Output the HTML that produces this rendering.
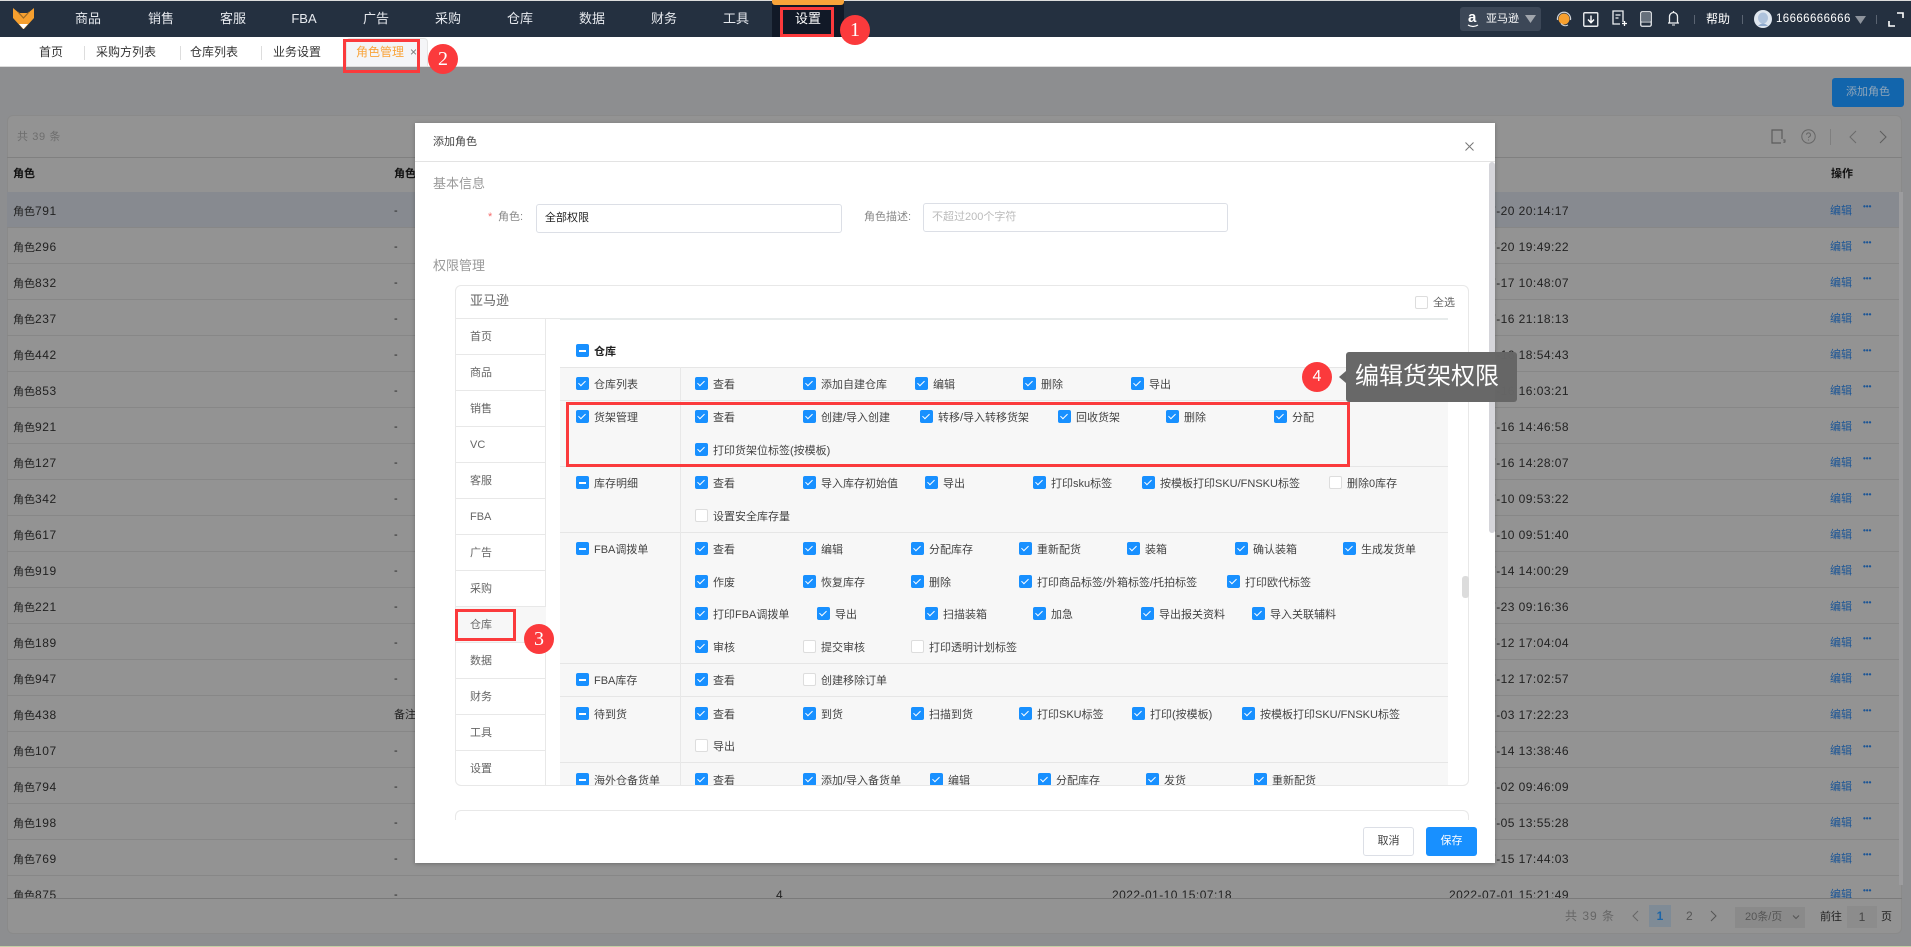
<!DOCTYPE html>
<html lang="zh">
<head>
<meta charset="utf-8">
<title>添加角色</title>
<style>
*{box-sizing:border-box}
html,body{margin:0;padding:0;width:1911px;height:947px;overflow:hidden;background:#8d8e90}
body{position:relative;font:11px/14px "Liberation Sans","Noto Sans CJK SC",sans-serif;color:#333}
div,span,a,i,svg{position:absolute}
.nav{left:0;top:1px;width:1911px;height:36px;background:#243040}
.n{top:10px;width:72px;text-align:center;font-size:13px;line-height:18px;color:#e6e9ee}
.tabs{left:0;top:37px;width:1911px;height:30px;background:#fff;border-bottom:1px solid #dcdcdc}
.tb{top:8px;font-size:12px;line-height:16px;color:#333;white-space:nowrap}
.card{left:7px;top:115px;width:1895px;height:819px;background:#939393;border:1px solid #8a8a8a;border-radius:6px}
.r{left:7px;width:1892px;height:36px;line-height:38px;border-bottom:1px solid #878787;color:#222;white-space:nowrap;font-size:11px}
.r a{top:0}
.a1{left:6px}.a1 b{font-weight:400;font-size:12px;letter-spacing:.6px}
.a2{left:387px}
.a3{left:769px;font-size:12px}
.d1{left:1105px;font-size:12px;letter-spacing:.45px}
.d2{left:1442px;font-size:12px;letter-spacing:.45px}
.e{left:1823px;color:#1b5596}
.m{left:1856px;top:-4px!important;color:#1b5596;font-size:8px;font-weight:700}
.modal{left:415px;top:123px;width:1080px;height:740px;background:#fff;box-shadow:0 1px 4px rgba(0,0,0,.25)}
.lb{color:#999;white-space:nowrap}
.ip{background:#fff;border:1px solid #dcdfe6;border-radius:3px;height:29px;line-height:27px;padding-left:8px;white-space:nowrap}
.s{left:456px;width:89px;height:36px;border-bottom:1px solid #e8e8e8;padding-left:14px;line-height:36px;color:#666;font-size:11px;background:#fff}
.rw{left:560px;width:888px;background:#f7f7f7;border-top:1px solid #e6e6e6}
.cv{left:680px;width:1px;background:#e8e8e8}
.p{white-space:nowrap;height:14px;color:#444;padding-left:18px;font-size:11px;line-height:14px}
.p i{left:0;top:-1px;width:13px;height:13px;background:#1890ff;border-radius:2px}
.p i:after{content:"";position:absolute;left:4px;top:2px;width:3px;height:6px;border:solid #fff;border-width:0 1px 1px 0;transform:rotate(45deg)}
.p.u i{background:#fff;border:1px solid #ddd}
.p.u i:after{display:none}
.p.h i:after{left:3px;top:6px;width:7px;height:1.5px;background:#fff;border:0;transform:none}
.rb{border:3px solid #fb3a3c;background:transparent}
.ci{width:30px;height:30px;border-radius:50%;background:#fb3a3c;color:#fff;text-align:center;line-height:30px;font-size:20px;font-family:"Liberation Serif",serif}
</style>
</head>
<body>
<div style="left:0;top:0;width:1911px;height:1px;background:#ddd"></div>

<!-- NAV -->
<div class="nav"></div>
<svg style="left:13px;top:8px" width="21" height="21" viewBox="0 0 21 21"><polygon points="0,0 6,5 15,5 21,0 21,10 11,21 10,21 0,10" fill="#f7a02f"/><polyline points="5,4 10.5,10 16,4" fill="none" stroke="#9c6a28" stroke-width="1.2"/><polygon points="6,16 15,16 10.5,21" fill="#fff"/></svg>
<div style="left:772px;top:1px;width:72px;height:36px;background:#111927"></div>
<div style="left:772px;top:0;width:72px;height:5px;background:#f9a43a;border-radius:0 0 3px 3px"></div>
<div class="n" style="left:52px">商品</div>
<div class="n" style="left:125px">销售</div>
<div class="n" style="left:197px">客服</div>
<div class="n" style="left:268px">FBA</div>
<div class="n" style="left:340px">广告</div>
<div class="n" style="left:412px">采购</div>
<div class="n" style="left:484px">仓库</div>
<div class="n" style="left:556px">数据</div>
<div class="n" style="left:628px">财务</div>
<div class="n" style="left:700px">工具</div>
<div class="n" style="left:772px;color:#fff">设置</div>

<div style="left:1460px;top:7px;width:81px;height:24px;background:#3c4757;border-radius:3px"></div>
<div style="left:1468px;top:9px;color:#fff;font:700 15px/18px 'Liberation Sans',sans-serif">a</div>
<svg style="left:1467px;top:24px" width="12" height="4" viewBox="0 0 12 4"><path d="M1 1Q6 4 11 1" fill="none" stroke="#fff" stroke-width="1.2"/></svg>
<div style="left:1486px;top:12px;color:#fff;font-size:11px">亚马逊</div>
<svg style="left:1525px;top:15px" width="11" height="8"><polygon points="0,0 11,0 5.5,8" fill="#a0a5ac"/></svg>
<svg style="left:1556px;top:11px" width="16" height="17" viewBox="0 0 16 17"><circle cx="8" cy="8" r="5.5" fill="#f7a02f"/><path d="M1.5 9A6.6 6.6 0 1 1 14.5 9" fill="none" stroke="#cfd3d8" stroke-width="1.2"/><path d="M5 12.5Q8 16 12 14" fill="none" stroke="#cfd3d8"/></svg>
<svg style="left:1583px;top:12px" width="16" height="15" viewBox="0 0 16 15"><rect x=".75" y=".75" width="14" height="13.5" rx="1" fill="none" stroke="#e8eaed" stroke-width="1.4"/><path d="M8 3.5v7M5 7.5l3 3.2 3-3.2" fill="none" stroke="#fff" stroke-width="1.4"/></svg>
<svg style="left:1612px;top:10px" width="16" height="17" viewBox="0 0 16 17"><path d="M11 12V1H1v13h7M3.5 5h5M3.5 8h3" fill="none" stroke="#eef0f2" stroke-width="1.3"/><path d="M12.5 11v5M10 13.5h5" stroke="#fff" stroke-width="1.3"/></svg>
<svg style="left:1640px;top:11px" width="12" height="16" viewBox="0 0 12 16"><rect x=".75" y=".75" width="10.5" height="14.5" rx="1.5" fill="none" stroke="#e8eaed" stroke-width="1.3"/><rect x="2" y="2" width="8" height="8" fill="#66707c"/><path d="M1 11h10" stroke="#e8eaed"/></svg>
<svg style="left:1667px;top:10px" width="13" height="17" viewBox="0 0 13 17"><path d="M1 13h11M2.5 13V6.5a4 4 0 0 1 8 0V13M6.5 1v1.5" fill="none" stroke="#eef0f2" stroke-width="1.3"/><path d="M5 15h3" stroke="#eef0f2"/></svg>
<div style="left:1694px;top:15px;width:1px;height:9px;background:#5a6472"></div>
<div style="left:1706px;top:11px;color:#fff;font-size:12px;line-height:17px">帮助</div>
<div style="left:1742px;top:15px;width:1px;height:9px;background:#5a6472"></div>
<svg style="left:1754px;top:10px" width="18" height="18" viewBox="0 0 18 18"><circle cx="9" cy="9" r="9" fill="#dfe6ef"/><ellipse cx="9" cy="8" rx="5" ry="5.5" fill="#aec2dc"/><path d="M4 16q5-5 10 0" fill="#8fa9cc"/></svg>
<div style="left:1776px;top:12px;color:#fff;font-size:11.5px;letter-spacing:.4px">16666666666</div>
<svg style="left:1855px;top:16px" width="11" height="8"><polygon points="0,0 11,0 5.5,8" fill="#8d939c"/></svg>
<div style="left:1876px;top:15px;width:1px;height:9px;background:#5a6472"></div>
<svg style="left:1888px;top:12px" width="16" height="15" viewBox="0 0 16 15"><path d="M9 1h6v5M1 9v5h6" fill="none" stroke="#fff" stroke-width="1.6"/></svg>

<!-- TABS -->
<div class="tabs"></div>
<div class="tb" style="left:39px;top:44px">首页</div>
<div style="left:84px;top:46px;width:1px;height:14px;background:#ddd"></div>
<div class="tb" style="left:96px;top:44px">采购方列表</div>
<div style="left:180px;top:46px;width:1px;height:14px;background:#ddd"></div>
<div class="tb" style="left:190px;top:44px">仓库列表</div>
<div style="left:261px;top:46px;width:1px;height:14px;background:#ddd"></div>
<div class="tb" style="left:273px;top:44px">业务设置</div>
<div style="left:346px;top:38px;width:82px;height:28px;background:#f4f5f7;border:1px solid #e4e4e4;border-bottom:0;border-radius:4px 4px 0 0"></div>
<div class="tb" style="left:356px;top:44px;color:#f9a43a">角色管理</div>
<div class="tb" style="left:410px;top:44px;color:#777">×</div>

<!-- PAGE -->
<div style="left:1832px;top:78px;width:72px;height:29px;background:#1265ac;border-radius:3px;color:#90a6ba;text-align:center;line-height:29px">添加角色</div>
<div class="card"></div>
<div style="left:17px;top:130px;color:#6e6e6e;font-size:11px;letter-spacing:.6px">共 39 条</div>
<svg style="left:1771px;top:129px" width="16" height="16" viewBox="0 0 16 16"><path d="M10 14H1V1h10v9" fill="none" stroke="#5c5c5c" stroke-width="1.2"/><path d="M12 11h2v2h-1v1" fill="none" stroke="#5c5c5c"/></svg>
<svg style="left:1801px;top:129px" width="15" height="15" viewBox="0 0 15 15"><circle cx="7.5" cy="7.5" r="6.7" fill="none" stroke="#666" stroke-width="1"/><path d="M5.5 5.7a2 2 0 1 1 2.8 2c-.6.3-.8.6-.8 1.3M7.5 10.5v1" fill="none" stroke="#666"/></svg>
<div style="left:1830px;top:129px;width:1px;height:16px;background:#7f7f7f"></div>
<svg style="left:1849px;top:130px" width="8" height="14"><path d="M7 1L1 7l6 6" fill="none" stroke="#6a6a6a"/></svg>
<svg style="left:1879px;top:130px" width="8" height="14"><path d="M1 1l6 6-6 6" fill="none" stroke="#5c5c5c"/></svg>
<div style="left:7px;top:157px;width:1895px;height:1px;background:#808080"></div>
<div style="left:13px;top:167px;color:#111;font-weight:700;font-size:11px">角色</div>
<div style="left:394px;top:167px;color:#111;font-weight:700;font-size:11px">角色</div>
<div style="left:1831px;top:167px;color:#111;font-weight:700;font-size:11px">操作</div>

<div style="left:0;top:0;width:1911px;height:898px;overflow:hidden">
<div class="r" style="top:192px;background:#878a90"><a class="a1">角色<b>791</b></a><a class="a2">-</a><a class="d2">2022-07-20 20:14:17</a><a class="e">编辑</a><a class="m">•••</a></div>
<div class="r" style="top:228px"><a class="a1">角色<b>296</b></a><a class="a2">-</a><a class="d2">2022-07-20 19:49:22</a><a class="e">编辑</a><a class="m">•••</a></div>
<div class="r" style="top:264px"><a class="a1">角色<b>832</b></a><a class="a2">-</a><a class="d2">2022-07-17 10:48:07</a><a class="e">编辑</a><a class="m">•••</a></div>
<div class="r" style="top:300px"><a class="a1">角色<b>237</b></a><a class="a2">-</a><a class="d2">2022-07-16 21:18:13</a><a class="e">编辑</a><a class="m">•••</a></div>
<div class="r" style="top:336px"><a class="a1">角色<b>442</b></a><a class="a2">-</a><a class="d2">2022-07-16 18:54:43</a><a class="e">编辑</a><a class="m">•••</a></div>
<div class="r" style="top:372px"><a class="a1">角色<b>853</b></a><a class="a2">-</a><a class="d2">2022-07-16 16:03:21</a><a class="e">编辑</a><a class="m">•••</a></div>
<div class="r" style="top:408px"><a class="a1">角色<b>921</b></a><a class="a2">-</a><a class="d2">2022-07-16 14:46:58</a><a class="e">编辑</a><a class="m">•••</a></div>
<div class="r" style="top:444px"><a class="a1">角色<b>127</b></a><a class="a2">-</a><a class="d2">2022-07-16 14:28:07</a><a class="e">编辑</a><a class="m">•••</a></div>
<div class="r" style="top:480px"><a class="a1">角色<b>342</b></a><a class="a2">-</a><a class="d2">2022-07-10 09:53:22</a><a class="e">编辑</a><a class="m">•••</a></div>
<div class="r" style="top:516px"><a class="a1">角色<b>617</b></a><a class="a2">-</a><a class="d2">2022-07-10 09:51:40</a><a class="e">编辑</a><a class="m">•••</a></div>
<div class="r" style="top:552px"><a class="a1">角色<b>919</b></a><a class="a2">-</a><a class="d2">2022-07-14 14:00:29</a><a class="e">编辑</a><a class="m">•••</a></div>
<div class="r" style="top:588px"><a class="a1">角色<b>221</b></a><a class="a2">-</a><a class="d2">2022-07-23 09:16:36</a><a class="e">编辑</a><a class="m">•••</a></div>
<div class="r" style="top:624px"><a class="a1">角色<b>189</b></a><a class="a2">-</a><a class="d2">2022-07-12 17:04:04</a><a class="e">编辑</a><a class="m">•••</a></div>
<div class="r" style="top:660px"><a class="a1">角色<b>947</b></a><a class="a2">-</a><a class="d2">2022-07-12 17:02:57</a><a class="e">编辑</a><a class="m">•••</a></div>
<div class="r" style="top:696px"><a class="a1">角色<b>438</b></a><a class="a2">备注</a><a class="d2">2022-07-03 17:22:23</a><a class="e">编辑</a><a class="m">•••</a></div>
<div class="r" style="top:732px"><a class="a1">角色<b>107</b></a><a class="a2">-</a><a class="d2">2022-07-14 13:38:46</a><a class="e">编辑</a><a class="m">•••</a></div>
<div class="r" style="top:768px"><a class="a1">角色<b>794</b></a><a class="a2">-</a><a class="d2">2022-07-02 09:46:09</a><a class="e">编辑</a><a class="m">•••</a></div>
<div class="r" style="top:804px"><a class="a1">角色<b>198</b></a><a class="a2">-</a><a class="d2">2022-07-05 13:55:28</a><a class="e">编辑</a><a class="m">•••</a></div>
<div class="r" style="top:840px"><a class="a1">角色<b>769</b></a><a class="a2">-</a><a class="d2">2022-07-15 17:44:03</a><a class="e">编辑</a><a class="m">•••</a></div>
<div class="r" style="top:876px"><a class="a1">角色<b>875</b></a><a class="a2">-</a><a class="a3">4</a><a class="d1">2022-01-10 15:07:18</a><a class="d2">2022-07-01 15:21:49</a><a class="e">编辑</a><a class="m">•••</a></div>
</div>
<div style="left:1899px;top:192px;width:4px;height:693px;background:#9c9c9e"></div>
<div style="left:7px;top:898px;width:1895px;height:1px;background:#7a7a7a"></div>

<!-- PAGINATION -->
<div style="left:1565px;top:909px;color:#666;font-size:12px;letter-spacing:1px">共 39 条</div>
<svg style="left:1632px;top:910px" width="7" height="12"><path d="M6 1L1 6l5 5" fill="none" stroke="#666"/></svg>
<div style="left:1649px;top:905px;width:22px;height:22px;background:#7f8b96;color:#1b65a8;text-align:center;line-height:22px;font-size:12px;font-weight:700">1</div>
<div style="left:1686px;top:909px;color:#555;font-size:12px">2</div>
<svg style="left:1710px;top:910px" width="7" height="12"><path d="M1 1l5 5-5 5" fill="none" stroke="#555"/></svg>
<div style="left:1735px;top:907px;width:70px;height:21px;background:#8a8a8a;color:#555;line-height:21px;padding-left:10px;font-size:11px">20条/页</div>
<svg style="left:1792px;top:915px" width="8" height="5"><path d="M1 .5l3 3 3-3" fill="none" stroke="#555"/></svg>
<div style="left:1820px;top:910px;color:#222;font-size:11px">前往</div>
<div style="left:1847px;top:906px;width:30px;height:22px;background:#8c8c8c;color:#444;text-align:center;line-height:22px;font-size:12px">1</div>
<div style="left:1881px;top:910px;color:#222;font-size:11px">页</div>
<div style="left:0;top:946px;width:1911px;height:1px;background:#c5cfa5"></div>

<!-- MODAL -->
<div class="modal"></div>
<div style="left:415px;top:161px;width:1080px;height:1px;background:#e3e3e3"></div>
<div style="left:433px;top:135px;color:#444">添加角色</div>
<svg style="left:1465px;top:142px" width="9" height="9"><path d="M.5.5l8 8M8.5.5l-8 8" stroke="#777" fill="none"/></svg>
<div style="left:1489px;top:162px;width:6px;height:371px;background:#d5d5da;border-radius:3px"></div>
<div class="lb" style="left:433px;top:176px;font-size:13px;line-height:16px">基本信息</div>
<div style="left:488px;top:210px;color:#f56c6c">*</div>
<div class="lb" style="left:498px;top:210px;color:#888">角色:</div>
<div class="ip" style="left:536px;top:204px;width:306px;color:#222">全部权限</div>
<div class="lb" style="left:864px;top:210px;color:#888">角色描述:</div>
<div class="ip" style="left:923px;top:203px;width:305px;color:#bbb">不超过200个字符</div>
<div class="lb" style="left:433px;top:258px;font-size:13px;line-height:16px">权限管理</div>

<div style="left:455px;top:285px;width:1014px;height:501px;border:1px solid #e8e8e8;border-radius:6px;background:#fff"></div>
<div style="left:470px;top:293px;color:#666;font-size:13px;line-height:16px">亚马逊</div>
<div class="p u" style="left:1415px;top:296px;color:#666"><i style="top:0"></i>全选</div>
<div style="left:456px;top:318px;width:992px;height:1px;background:#e8e8e8"></div>
<div style="left:560px;top:318px;width:888px;height:2px;background:#e7ebeb"></div>

<!-- SIDE -->
<div style="left:545px;top:319px;width:1px;height:466px;background:#e8e8e8"></div>
<div class="s" style="top:319px">首页</div>
<div class="s" style="top:355px">商品</div>
<div class="s" style="top:391px">销售</div>
<div class="s" style="top:427px">VC</div>
<div class="s" style="top:463px">客服</div>
<div class="s" style="top:499px">FBA</div>
<div class="s" style="top:535px">广告</div>
<div class="s" style="top:571px">采购</div>
<div class="s" style="top:607px;background:#f7f7f7;width:90px;border-right:0">仓库</div>
<div class="s" style="top:643px">数据</div>
<div class="s" style="top:679px">财务</div>
<div class="s" style="top:715px">工具</div>
<div class="s" style="top:751px;border-bottom:0;height:33px;border-bottom-left-radius:6px">设置</div>

<!-- PERMISSION TABLE -->
<div style="left:0;top:0;width:1911px;height:785px;overflow:hidden">
<div class="p h" style="left:576px;top:345px;font-weight:700;color:#222"><i></i>仓库</div>
<div class="rw" style="top:367px;height:33px"></div>
<div class="rw" style="top:400px;height:66px"></div>
<div class="rw" style="top:466px;height:66px"></div>
<div class="rw" style="top:532px;height:131px"></div>
<div class="rw" style="top:663px;height:33px"></div>
<div class="rw" style="top:696px;height:66px"></div>
<div class="rw" style="top:762px;height:24px"></div>
<div class="cv" style="top:367px;height:418px"></div>

<div class="p" style="left:576px;top:378px"><i></i>仓库列表</div>
<div class="p" style="left:695px;top:378px"><i></i>查看</div>
<div class="p" style="left:803px;top:378px"><i></i>添加自建仓库</div>
<div class="p" style="left:915px;top:378px"><i></i>编辑</div>
<div class="p" style="left:1023px;top:378px"><i></i>删除</div>
<div class="p" style="left:1131px;top:378px"><i></i>导出</div>

<div class="p" style="left:576px;top:411px"><i></i>货架管理</div>
<div class="p" style="left:695px;top:411px"><i></i>查看</div>
<div class="p" style="left:803px;top:411px"><i></i>创建/导入创建</div>
<div class="p" style="left:920px;top:411px"><i></i>转移/导入转移货架</div>
<div class="p" style="left:1058px;top:411px"><i></i>回收货架</div>
<div class="p" style="left:1166px;top:411px"><i></i>删除</div>
<div class="p" style="left:1274px;top:411px"><i></i>分配</div>
<div class="p" style="left:695px;top:444px"><i></i>打印货架位标签(按模板)</div>

<div class="p h" style="left:576px;top:477px"><i></i>库存明细</div>
<div class="p" style="left:695px;top:477px"><i></i>查看</div>
<div class="p" style="left:803px;top:477px"><i></i>导入库存初始值</div>
<div class="p" style="left:925px;top:477px"><i></i>导出</div>
<div class="p" style="left:1033px;top:477px"><i></i>打印sku标签</div>
<div class="p" style="left:1142px;top:477px"><i></i>按模板打印SKU/FNSKU标签</div>
<div class="p u" style="left:1329px;top:477px"><i></i>删除0库存</div>
<div class="p u" style="left:695px;top:510px"><i></i>设置安全库存量</div>

<div class="p h" style="left:576px;top:543px"><i></i>FBA调拨单</div>
<div class="p" style="left:695px;top:543px"><i></i>查看</div>
<div class="p" style="left:803px;top:543px"><i></i>编辑</div>
<div class="p" style="left:911px;top:543px"><i></i>分配库存</div>
<div class="p" style="left:1019px;top:543px"><i></i>重新配货</div>
<div class="p" style="left:1127px;top:543px"><i></i>装箱</div>
<div class="p" style="left:1235px;top:543px"><i></i>确认装箱</div>
<div class="p" style="left:1343px;top:543px"><i></i>生成发货单</div>
<div class="p" style="left:695px;top:576px"><i></i>作废</div>
<div class="p" style="left:803px;top:576px"><i></i>恢复库存</div>
<div class="p" style="left:911px;top:576px"><i></i>删除</div>
<div class="p" style="left:1019px;top:576px"><i></i>打印商品标签/外箱标签/托拍标签</div>
<div class="p" style="left:1227px;top:576px"><i></i>打印欧代标签</div>
<div class="p" style="left:695px;top:608px"><i></i>打印FBA调拨单</div>
<div class="p" style="left:817px;top:608px"><i></i>导出</div>
<div class="p" style="left:925px;top:608px"><i></i>扫描装箱</div>
<div class="p" style="left:1033px;top:608px"><i></i>加急</div>
<div class="p" style="left:1141px;top:608px"><i></i>导出报关资料</div>
<div class="p" style="left:1252px;top:608px"><i></i>导入关联辅料</div>
<div class="p" style="left:695px;top:641px"><i></i>审核</div>
<div class="p u" style="left:803px;top:641px"><i></i>提交审核</div>
<div class="p u" style="left:911px;top:641px"><i></i>打印透明计划标签</div>

<div class="p h" style="left:576px;top:674px"><i></i>FBA库存</div>
<div class="p" style="left:695px;top:674px"><i></i>查看</div>
<div class="p u" style="left:803px;top:674px"><i></i>创建移除订单</div>

<div class="p h" style="left:576px;top:708px"><i></i>待到货</div>
<div class="p" style="left:695px;top:708px"><i></i>查看</div>
<div class="p" style="left:803px;top:708px"><i></i>到货</div>
<div class="p" style="left:911px;top:708px"><i></i>扫描到货</div>
<div class="p" style="left:1019px;top:708px"><i></i>打印SKU标签</div>
<div class="p" style="left:1132px;top:708px"><i></i>打印(按模板)</div>
<div class="p" style="left:1242px;top:708px"><i></i>按模板打印SKU/FNSKU标签</div>
<div class="p u" style="left:695px;top:740px"><i></i>导出</div>

<div class="p h" style="left:576px;top:774px"><i></i>海外仓备货单</div>
<div class="p" style="left:695px;top:774px"><i></i>查看</div>
<div class="p" style="left:803px;top:774px"><i></i>添加/导入备货单</div>
<div class="p" style="left:930px;top:774px"><i></i>编辑</div>
<div class="p" style="left:1038px;top:774px"><i></i>分配库存</div>
<div class="p" style="left:1146px;top:774px"><i></i>发货</div>
<div class="p" style="left:1254px;top:774px"><i></i>重新配货</div>
</div>
<div style="left:1462px;top:576px;width:7px;height:22px;background:#dcdcdc;border-radius:3px"></div>

<!-- SECOND BOX -->
<div style="left:455px;top:810px;width:1014px;height:10px;border:1px solid #e8e8e8;border-bottom:0;border-radius:6px 6px 0 0"></div>

<!-- FOOTER -->
<div style="left:1363px;top:827px;width:51px;height:29px;background:#fff;border:1px solid #dcdfe6;border-radius:3px;text-align:center;line-height:27px;color:#444">取消</div>
<div style="left:1426px;top:827px;width:51px;height:29px;background:#1890ff;border-radius:3px;text-align:center;line-height:29px;color:#fff">保存</div>

<!-- ANNOTATIONS -->
<div class="rb" style="left:780px;top:7px;width:54px;height:30px"></div>
<div class="ci" style="left:840px;top:15px">1</div>
<div class="rb" style="left:343px;top:39px;width:77px;height:34px"></div>
<div class="ci" style="left:428px;top:44px">2</div>
<div class="rb" style="left:455px;top:609px;width:61px;height:32px"></div>
<div class="ci" style="left:524px;top:624px">3</div>
<div class="rb" style="left:566px;top:402px;width:784px;height:65px"></div>
<div class="ci" style="left:1302px;top:362px;font:16px/30px 'Liberation Sans',sans-serif">4</div>
<div style="left:1339px;top:371px;width:0;height:0;border:6px solid transparent;border-left:0;border-right:7px solid #666"></div>
<div style="left:1346px;top:352px;width:171px;height:50px;background:#666;opacity:.98;border-radius:3px;color:#fff;font-size:24px;line-height:50px;padding-left:9px;white-space:nowrap">编辑货架权限</div>
</body>
</html>
